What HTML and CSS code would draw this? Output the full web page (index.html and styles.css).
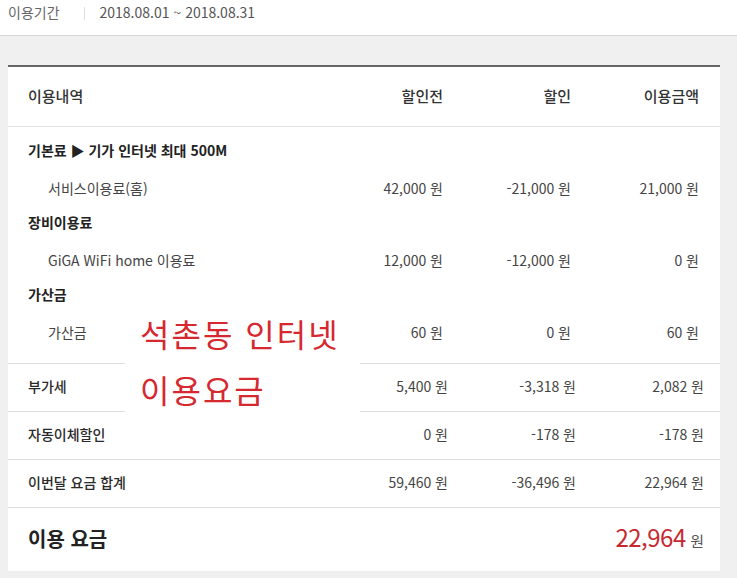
FILE: index.html
```html
<!DOCTYPE html>
<html lang="ko">
<head>
    <meta charset="UTF-8">
    <meta name="viewport" content="width=device-width, initial-scale=1.0">
    <title>요금 상세</title>
    <link rel="stylesheet" href="styles.css">
</head>
<body>
    <div class="period">
        <span class="period-label">이용기간</span>
        <span class="period-bar"></span>
        <span class="period-date">2018.08.01 ~ 2018.08.31</span>
    </div>

    <div class="content">
        <div class="card">
            <table class="bill">
                <colgroup>
                    <col>
                    <col class="col-num">
                    <col class="col-num">
                    <col class="col-last">
                </colgroup>
                <thead>
                    <tr>
                        <th class="name">이용내역</th>
                        <th class="num">할인전</th>
                        <th class="num">할인</th>
                        <th class="num last">이용금액</th>
                    </tr>
                </thead>
                <tbody class="group">
                    <tr class="title first">
                        <td colspan="4">기본료 ▶ 기가 인터넷 최대 500M</td>
                    </tr>
                    <tr class="item">
                        <td class="name">서비스이용료(홈)</td>
                        <td class="num">42,000 원</td>
                        <td class="num">-21,000 원</td>
                        <td class="num last">21,000 원</td>
                    </tr>
                    <tr class="title">
                        <td colspan="4">장비이용료</td>
                    </tr>
                    <tr class="item">
                        <td class="name">GiGA WiFi home 이용료</td>
                        <td class="num">12,000 원</td>
                        <td class="num">-12,000 원</td>
                        <td class="num last">0 원</td>
                    </tr>
                    <tr class="title">
                        <td colspan="4">가산금</td>
                    </tr>
                    <tr class="item end">
                        <td class="name">가산금</td>
                        <td class="num">60 원</td>
                        <td class="num">0 원</td>
                        <td class="num last">60 원</td>
                    </tr>
                </tbody>
                <tbody class="sum">
                    <tr>
                        <td class="name">부가세</td>
                        <td class="num">5,400 원</td>
                        <td class="num">-3,318 원</td>
                        <td class="num last">2,082 원</td>
                    </tr>
                    <tr>
                        <td class="name">자동이체할인</td>
                        <td class="num">0 원</td>
                        <td class="num">-178 원</td>
                        <td class="num last">-178 원</td>
                    </tr>
                    <tr>
                        <td class="name">이번달 요금 합계</td>
                        <td class="num">59,460 원</td>
                        <td class="num">-36,496 원</td>
                        <td class="num last">22,964 원</td>
                    </tr>
                </tbody>
                <tfoot>
                    <tr class="total">
                        <td class="name">이용 요금</td>
                        <td colspan="3" class="num last">
                            <span class="total-amount">22,964</span>
                            <span class="total-unit">원</span>
                        </td>
                    </tr>
                </tfoot>
            </table>

            <!-- 이미지 위에 덧붙인 문구 -->
            <div class="stamp">
                <div>석촌동 인터넷</div>
                <div>이용요금</div>
            </div>
        </div>
    </div>
</body>
</html>
```

FILE: styles.css
```css
body {
    font-family: 'Noto Sans CJK KR', 'Noto Sans', sans-serif;
    margin: 0;
    padding: 0;
    background-color: #f0f0f0;
    color: #444;
}
.period {
    height: 35px;
    background: white;
    border-bottom: 1px solid #d6d6d6;
    padding-left: 8px;
    display: flex;
    align-items: flex-start;
    font-size: 14px;
    line-height: 24px;
}
.period-label {
    color: #666;
}
.period-bar {
    width: 1px;
    height: 13px;
    background: #ddd;
    margin: 7px 15px 0 24px;
}
.period-date {
    color: #555;
}
.content {
    padding: 29px 17px 10px 8px;
}
.card {
    position: relative;
    background: white;
    border-top: 2px solid #666;
}
.bill {
    width: 100%;
    border-collapse: collapse;
    table-layout: fixed;
}
.col-num {
    width: 128px;
}
.col-last {
    width: 144px;
}
.bill th, .bill td {
    padding: 0;
    line-height: 20px;
    white-space: nowrap;
    box-sizing: border-box;
}
.bill .name {
    text-align: left;
    padding-left: 20px;
}
.bill .num {
    text-align: right;
    padding-right: 5px;
}
.bill .num.last {
    padding-right: 21px;
}
.bill thead th {
    height: 59px;
    font-size: 15px;
    font-weight: 500;
    color: #333;
    border-bottom: 1px solid #e2e2e2;
}
.group td {
    font-size: 14px;
}
.group .title td {
    padding: 14px 0 0 20px;
    font-weight: bold;
    color: #222;
}
.group .title.first td {
    padding-top: 13px;
}
.group .item td {
    padding-top: 18px;
}
.group .item .name {
    padding-left: 40px;
}
.group .item.end td {
    padding-bottom: 21px;
}
.sum td {
    font-size: 14px;
    border-top: 1px solid #dedede;
    padding-top: 12px;
    padding-bottom: 15px;
}
.sum .name {
    font-weight: 500;
    color: #2a2a2a;
}
.sum .num {
    padding-right: 0;
}
.sum .num.last {
    padding-right: 16px;
}
.total td {
    height: 64px;
    border-top: 1px solid #dedede;
    vertical-align: middle;
}
.total .name {
    font-size: 20px;
    font-weight: bold;
    color: #222;
}
.total .num.last {
    padding-right: 16px;
}
.total-amount {
    font-size: 24px;
    color: #c62a30;
    letter-spacing: -0.5px;
}
.total-unit {
    font-size: 15px;
    color: #555;
}
.stamp {
    position: absolute;
    left: 117px;
    top: 235px;
    width: 235px;
    height: 113px;
    background: white;
    padding: 3px 0 0 15px;
    box-sizing: border-box;
    font-size: 32px;
    line-height: 56px;
    letter-spacing: 2px;
    color: #d6282f;
}
```
